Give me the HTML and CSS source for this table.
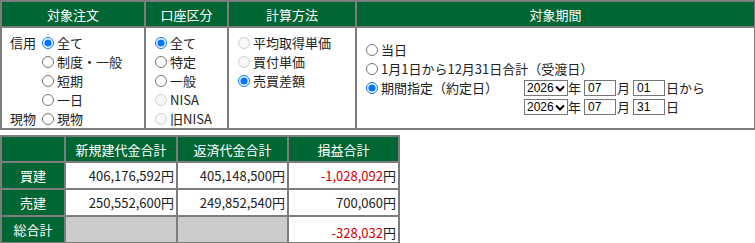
FILE: index.html
```html
<!DOCTYPE html>
<html lang="ja">
<head>
    <meta charset="UTF-8">
    <meta name="viewport" content="width=device-width, initial-scale=1.0">
    <title>損益照会</title>
    <link rel="stylesheet" href="styles.css">
</head>
<body>
    <!-- 検索条件 -->
    <table class="cond">
        <colgroup>
            <col class="c-order">
            <col class="c-account">
            <col class="c-calc">
            <col class="c-period">
        </colgroup>
        <tr>
            <th>対象注文</th>
            <th>口座区分</th>
            <th>計算方法</th>
            <th>対象期間</th>
        </tr>
        <tr>
            <td>
                <div class="order-grid">
                    <span class="kind">信用</span>
                    <label class="opt"><input type="radio" name="order" checked>全て</label>
                    <span></span>
                    <label class="opt"><input type="radio" name="order">制度・一般</label>
                    <span></span>
                    <label class="opt"><input type="radio" name="order">短期</label>
                    <span></span>
                    <label class="opt"><input type="radio" name="order">一日</label>
                    <span class="kind">現物</span>
                    <label class="opt"><input type="radio" name="order">現物</label>
                </div>
            </td>
            <td>
                <label class="opt"><input type="radio" name="account" checked>全て</label>
                <label class="opt"><input type="radio" name="account">特定</label>
                <label class="opt"><input type="radio" name="account">一般</label>
                <label class="opt"><input type="radio" name="account" disabled>NISA</label>
                <label class="opt"><input type="radio" name="account" disabled>旧NISA</label>
            </td>
            <td>
                <label class="opt"><input type="radio" name="calc" disabled>平均取得単価</label>
                <label class="opt"><input type="radio" name="calc" disabled>買付単価</label>
                <label class="opt"><input type="radio" name="calc" checked>売買差額</label>
            </td>
            <td class="period">
                <div class="period-grid">
                    <label class="opt wide"><input type="radio" name="period">当日</label>
                    <label class="opt wide"><input type="radio" name="period">1月1日から12月31日合計（受渡日）</label>
                    <label class="opt"><input type="radio" name="period" checked>期間指定（約定日）</label>
                    <div class="date">
                        <span class="sel">
                            <select class="year"><option>2026</option></select>
                            <svg class="arrow" width="10" height="7" viewBox="0 0 10 7"><path d="M1 1.5 L5 5.5 L9 1.5" fill="none" stroke="#000" stroke-width="2"/></svg>
                        </span>年
                        <input type="text" class="md" value="07">月
                        <input type="text" class="md" value="01">日から
                    </div>
                    <span></span>
                    <div class="date">
                        <span class="sel">
                            <select class="year"><option>2026</option></select>
                            <svg class="arrow" width="10" height="7" viewBox="0 0 10 7"><path d="M1 1.5 L5 5.5 L9 1.5" fill="none" stroke="#000" stroke-width="2"/></svg>
                        </span>年
                        <input type="text" class="md" value="07">月
                        <input type="text" class="md" value="31">日
                    </div>
                </div>
            </td>
        </tr>
    </table>

    <!-- 損益合計 -->
    <table class="total">
        <colgroup>
            <col class="c-label">
            <col class="c-amt1">
            <col class="c-amt2">
            <col class="c-amt3">
        </colgroup>
        <tr>
            <th></th>
            <th>新規建代金合計</th>
            <th>返済代金合計</th>
            <th>損益合計</th>
        </tr>
        <tr>
            <th>買建</th>
            <td>406,176,592円</td>
            <td>405,148,500円</td>
            <td><span class="minus">-1,028,092</span>円</td>
        </tr>
        <tr>
            <th>売建</th>
            <td>250,552,600円</td>
            <td>249,852,540円</td>
            <td>700,060円</td>
        </tr>
        <tr>
            <th>総合計</th>
            <td class="blank"></td>
            <td class="blank"></td>
            <td class="last"><span class="minus">-328,032</span>円</td>
        </tr>
    </table>
</body>
</html>
```

FILE: styles.css
```css
body {
    margin: 0;
    font-family: "Noto Sans CJK JP", "Noto Sans", sans-serif;
    font-size: 13px;
    color: #222;
    background: #fff;
}

table {
    border-collapse: collapse;
    table-layout: fixed;
}

th {
    background-color: #006634;
    color: #fff;
    font-weight: normal;
    border: 2px solid #7d7d7d;
}

td {
    border: 2px solid #7d7d7d;
}

/* 検索条件 */
.cond {
    width: 754px;
}

.c-order { width: 144px; }
.c-account { width: 83px; }
.c-calc { width: 128px; }
.c-period { width: 399px; }

.cond th {
    height: 24px;
    padding: 0;
}

.cond td {
    vertical-align: top;
    height: 99px;
    padding: 5px 0 0 7px;
    box-sizing: border-box;
}

.cond td.period {
    padding: 12px 0 0 7px;
}

.opt {
    display: flex;
    align-items: center;
    height: 19px;
    white-space: nowrap;
}

.opt input {
    width: 12px;
    height: 12px;
    margin: 0 3px 0 2px;
}

.order-grid {
    display: grid;
    grid-template-columns: 31px auto;
}

.kind {
    line-height: 19px;
    padding-left: 1px;
}

.period-grid {
    display: grid;
    grid-template-columns: 160px auto;
}

.wide {
    grid-column: 1 / 3;
}

.date {
    display: flex;
    align-items: center;
    height: 19px;
}

.sel {
    position: relative;
    display: inline-block;
    height: 16px;
}

.date .year {
    appearance: none;
    display: block;
    box-sizing: border-box;
    width: 44px;
    height: 16px;
    padding: 0 0 0 2px;
    font-family: "Liberation Sans", Arial, sans-serif;
    font-size: 12px;
    line-height: 14px;
    border: 1px solid #767676;
    border-radius: 0;
    background: #fff;
    color: #000;
}

.sel .arrow {
    position: absolute;
    right: 3px;
    top: 5px;
    pointer-events: none;
}

.date .md {
    box-sizing: border-box;
    width: 32px;
    height: 16px;
    padding: 0 3px;
    margin: 0 1px 0 3px;
    font-family: "Liberation Sans", Arial, sans-serif;
    font-size: 12px;
    border: 1px solid #767676;
    color: #000;
}

/* 損益合計 */
.total {
    margin-top: 5px;
    width: 398px;
}

.c-label { width: 64px; }
.c-amt1 { width: 112px; }
.c-amt2 { width: 111px; }
.c-amt3 { width: 111px; }

.total th {
    height: 24px;
    padding: 0;
}

.total td {
    height: 25px;
    padding: 0 2px 0 0;
    text-align: right;
}

.total td.blank {
    background-color: #cccccc;
}

.total td.last {
    vertical-align: bottom;
}

.minus {
    color: #d00000;
}
```
